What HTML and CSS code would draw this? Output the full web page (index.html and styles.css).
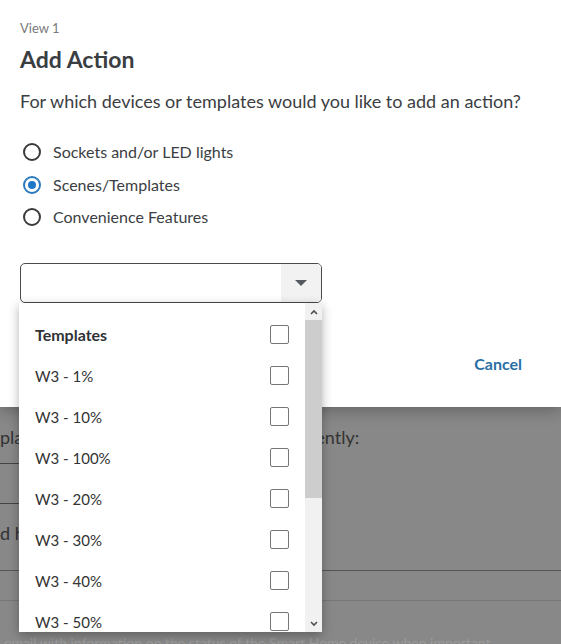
FILE: index.html
```html
<!DOCTYPE html>
<html>
<head>
<meta charset="utf-8">
<link rel="stylesheet" href="styles.css">
</head>
<body>
<div class="modal">
  <div class="view">View 1</div>
  <h1 class="title">Add Action</h1>
  <p class="question">For which devices or templates would you like to add an action?</p>
  <div class="radios">
    <label class="radio"><span class="dot"></span><span>Sockets and/or LED lights</span></label>
    <label class="radio checked"><span class="dot"></span><span>Scenes/Templates</span></label>
    <label class="radio"><span class="dot"></span><span>Convenience Features</span></label>
  </div>
  <div class="select-wrap">
    <div class="select">
      <div class="select-value"></div>
      <div class="select-arrow"><span class="tri"></span></div>
    </div>
    <div class="menu">
      <div class="menu-list">
        <div class="opt head"><span>Templates</span><span class="box"></span></div>
        <div class="opt"><span>W3 - 1%</span><span class="box"></span></div>
        <div class="opt"><span>W3 - 10%</span><span class="box"></span></div>
        <div class="opt"><span>W3 - 100%</span><span class="box"></span></div>
        <div class="opt"><span>W3 - 20%</span><span class="box"></span></div>
        <div class="opt"><span>W3 - 30%</span><span class="box"></span></div>
        <div class="opt"><span>W3 - 40%</span><span class="box"></span></div>
        <div class="opt"><span>W3 - 50%</span><span class="box"></span></div>
      </div>
      <div class="scrollbar">
        <div class="sb-btn"><svg width="8" height="6" viewBox="0 0 8 6"><path d="M1 5 L4 2 L7 5" fill="none" stroke="#505050" stroke-width="1.6"/></svg></div>
        <div class="sb-track"><div class="sb-thumb"></div></div>
        <div class="sb-btn"><svg width="8" height="6" viewBox="0 0 8 6"><path d="M1 1 L4 4 L7 1" fill="none" stroke="#505050" stroke-width="1.6"/></svg></div>
      </div>
    </div>
  </div>
  <div class="actions"><button class="cancel">Cancel</button></div>
</div>
<div class="behind">
  <div class="b-row b-text"><span>pla</span><span class="b-right">ently:</span></div>
  <div class="b-field first"></div>
  <div class="b-field"></div>
  <div class="b-row b-text2">d h</div>
  <div class="b-rule dark"></div>
  <div class="b-rule light"></div>
  <div class="b-faded">email with information on the status of the Smart Home device when important</div>
</div>
</body>
</html>
```
FILE: styles.css
```css
* { box-sizing: border-box; }
html, body { margin: 0; padding: 0; }
body {
  width: 561px;
  height: 644px;
  overflow: hidden;
  background: #888888;
  font-family: "Lato", "Liberation Sans", sans-serif;
  color: #3b3e42;
}
.modal {
  position: relative;
  z-index: 2;
  background: #fff;
  height: 407px;
  padding: 20px 20px 0 20px;
  box-shadow: 0 4px 14px rgba(0,0,0,0.25);
}
.view {
  font-size: 13px;
  color: #77797c;
  line-height: 17px;
}
.title {
  margin: 6px 0 0 0;
  font-size: 23px;
  font-weight: 700;
  line-height: 32px;
  color: #3a3d41;
}
.question {
  margin: 14px 0 0 0;
  font-size: 18px;
  line-height: 24px;
  color: #3b3e42;
}
.radios {
  margin-top: 27px;
  display: flex;
  flex-direction: column;
  gap: 8.5px;
}
.radio {
  display: flex;
  align-items: center;
  gap: 12px;
  font-size: 16px;
  line-height: 24px;
  color: #3b3e42;
  padding-left: 3px;
}
.dot {
  width: 18px;
  height: 18px;
  border: 2px solid #3a3a3a;
  border-radius: 50%;
  display: inline-block;
  position: relative;
}
.radio.checked .dot { border-color: #2b7bc0; }
.radio.checked .dot::after {
  content: "";
  position: absolute;
  left: 3px; top: 3px;
  width: 8px; height: 8px;
  border-radius: 50%;
  background: #1e78c8;
}
.select-wrap {
  position: relative;
  margin-top: 34px;
  width: 302px;
}
.select {
  display: flex;
  height: 40px;
  border: 1px solid #4a4a4a;
  border-radius: 5px;
  overflow: hidden;
}
.select-value { flex: 1; }
.select-arrow {
  width: 40px;
  background: #f2f2f3;
  display: flex;
  align-items: center;
  justify-content: center;
}
.tri {
  width: 0; height: 0;
  border-left: 6px solid transparent;
  border-right: 6px solid transparent;
  border-top: 6px solid #555a60;
}
.menu {
  position: absolute;
  left: -1px;
  top: 40px;
  width: 303px;
  height: 329px;
  background: #fff;
  display: flex;
  box-shadow: 0 3px 10px rgba(0,0,0,0.3);
  overflow: hidden;
}
.menu-list {
  flex: 1;
  padding: 11px 16px 0 16px;
}
.opt {
  display: flex;
  justify-content: space-between;
  align-items: center;
  height: 41px;
  font-size: 15px;
  color: #333;
}
.opt.head { font-weight: 700; font-size: 16px; color: #2f3235; }
.box {
  width: 19px;
  height: 19px;
  border: 1.5px solid #767676;
  border-radius: 2px;
}
.scrollbar {
  width: 17px;
  background: #f1f1f1;
  display: flex;
  flex-direction: column;
}
.sb-btn {
  height: 17px;
  display: flex;
  align-items: center;
  justify-content: center;
}
.sb-track { flex: 1; }
.sb-thumb {
  height: 178px;
  background: #cdcdcd;
}
.actions {
  display: flex;
  justify-content: flex-end;
  margin-top: 51px;
  padding-right: 19px;
}
.cancel {
  background: none;
  border: 0;
  padding: 0;
  font-family: inherit;
  font-size: 16px;
  font-weight: 700;
  color: #2a6fa5;
}
.behind {
  position: relative;
  z-index: 1;
  color: #333;
}
.b-row {
  font-size: 18px;
  height: 24px;
  line-height: 24px;
}
.b-text {
  margin-top: 18px;
  display: flex;
}
.b-right { margin-left: 292px; }
.b-field {
  height: 40px;
  border-bottom: 1px solid #444;
  width: 200px;
}
.b-field.first { height: 15px; }
.b-text2 { margin-top: 17px; }
.b-rule { height: 1px; }
.b-rule.dark { margin-top: 25px; background: #555; }
.b-rule.light { margin-top: 29px; background: #777; }
.b-faded {
  margin-top: 33px;
  padding-left: 4px;
  font-size: 14px;
  color: #9a9a9a;
  white-space: nowrap;
}
```
